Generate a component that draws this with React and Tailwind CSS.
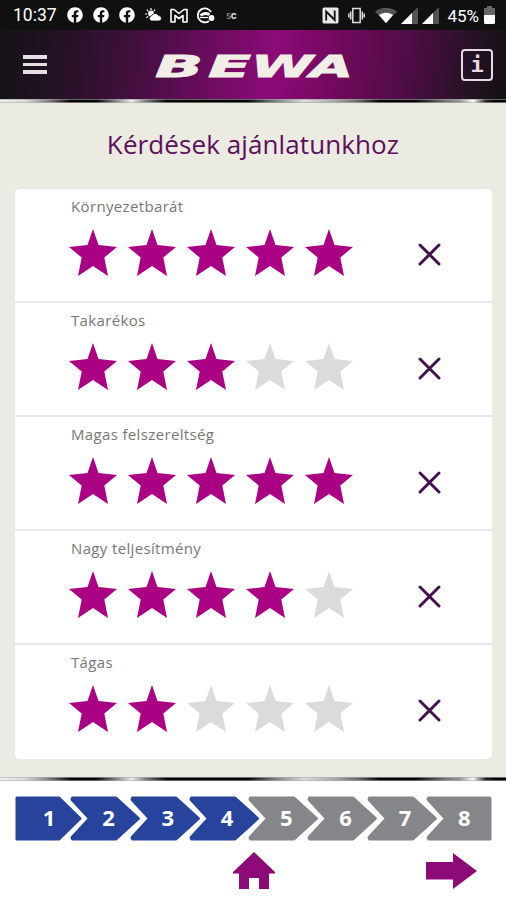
import { FaFacebook } from 'react-icons/fa';

const questions = [
  { label: 'Környezetbarát', value: 5 },
  { label: 'Takarékos', value: 3 },
  { label: 'Magas felszereltség', value: 5 },
  { label: 'Nagy teljesítmény', value: 4 },
  { label: 'Tágas', value: 2 },
];

const steps = [1, 2, 3, 4, 5, 6, 7, 8];
const currentStep = 4;

const StatusBar = () => (
  <div className="flex h-[30px] items-center bg-[#101010] pl-[13px] pr-[11px] text-white">
    <span className="w-[54px] pt-[2px] font-['Roboto',sans-serif] text-[17.5px] leading-none">10:37</span>
    <div className="flex gap-[10px]">
      <FaFacebook size={16} />
      <FaFacebook size={16} />
      <FaFacebook size={16} />
    </div>
    {/* Weather */}
    <svg className="ml-[10px]" width="17" height="14" viewBox="0 0 17 14" fill="#fff">
      <circle cx="6" cy="5.5" r="3" />
      <path d="M6 0v2M1.8 1.6l1.4 1.4M0 6h2M10 1.6L8.8 3M1.5 9.8l1.6-1.4" stroke="#fff" strokeWidth="1.2" />
      <path d="M6.5 13a2.7 2.7 0 0 1 .1-5.3A3.8 3.8 0 0 1 13.5 7.6A2.7 2.7 0 0 1 14 13z" stroke="#101010" strokeWidth=".8" />
    </svg>
    {/* Mail */}
    <svg className="ml-[8px]" width="18" height="15" viewBox="0 0 18 15" fill="none" stroke="#fff" strokeWidth="1.6" strokeLinejoin="round">
      <path d="M1 14V1.5H4L9 5.5L14 1.5H17V14H13V7.5L9 10.5L5 7.5V14Z" />
    </svg>
    {/* Circle badge */}
    <svg className="ml-[8px]" width="19" height="17" viewBox="0 0 19 17" fill="none" stroke="#fff" strokeWidth="1.8">
      <path d="M15 5A7 7 0 1 0 13 14" />
      <path d="M4.500 8.500Q8 5 13.500 7.500" strokeWidth="3" />
      <path d="M4 10.500H12" strokeWidth="1.200" />
      <circle cx="15.500" cy="11" r="2" fill="#fff" />
    </svg>
    <span className="ml-[11px] font-['Inter',sans-serif] text-[10px] font-bold leading-none tracking-[-0.5px] text-[#ddd]">
      <span className="font-normal text-[#999]">s</span>c
    </span>
    <div className="ml-auto flex items-center">
      {/* NFC */}
      <svg width="17" height="17" viewBox="0 0 17 17">
        <rect x=".5" y=".5" width="16" height="16" rx="1.5" fill="#e8e8e8" />
        <path d="M4.200 13.500V4.500l8.500 8.500V3.500" fill="none" stroke="#101010" strokeWidth="1.800" />
      </svg>
      {/* Vibrate */}
      <svg className="ml-[9px]" width="17" height="17" viewBox="0 0 17 17" fill="none" stroke="#ddd" strokeWidth="1.500">
        <rect x="4.800" y="1.500" width="7.400" height="14" />
        <path d="M2.700 4.500v8M.8 6.500v4M14.300 4.500v8M16.200 6.500v4" />
      </svg>
      {/* Wifi */}
      <svg className="ml-[10px]" width="22" height="17" viewBox="0 0 22 17">
        <path d="M0 4.500Q11-3 22 4.500L11 16.500Z" fill="#555" />
        <path d="M4 8Q11 3.500 18 8L11 16Z" fill="#fff" />
      </svg>
      {/* Signal */}
      <svg className="ml-[4px]" width="17" height="17" viewBox="0 0 17 17">
        <path d="M0 17L17 0V17Z" fill="#555" />
        <path d="M0 17L11 6V17Z" fill="#fff" />
      </svg>
      <svg className="ml-[4px]" width="17" height="17" viewBox="0 0 17 17">
        <path d="M0 17L17 0V17Z" fill="#555" />
        <path d="M0 17L11 6V17Z" fill="#fff" />
      </svg>
      <span className="ml-[8px] pt-[2px] font-['Roboto',sans-serif] text-[17px] leading-none">45%</span>
      {/* Battery */}
      <svg className="ml-[5px]" width="11" height="18" viewBox="0 0 11 18">
        <path d="M0 2H3V0H8V2H11V9H0Z" fill="#666" />
        <path d="M0 9H11V16.500Q11 18 9.500 18H1.500Q0 18 0 16.500Z" fill="#fff" />
      </svg>
    </div>
  </div>
);

const Header = () => (
  <header className="flex h-[69px] items-center bg-[linear-gradient(98deg,#151216_0%,#1e1220_9%,#3a1037_24%,#640c58_39%,#8c0b78_54%,#75095f_65%,#4e0c45_80%,#231222_93%,#131012_100%)] pl-[23px] pr-[13px]">
    <div className="flex w-6 flex-col gap-[4px]">
      <span className="h-[3.5px] bg-[#e4dfe2]"></span>
      <span className="h-[3.5px] bg-[#e4dfe2]"></span>
      <span className="h-[3.5px] bg-[#e4dfe2]"></span>
    </div>
    <svg className="ml-[101px]" width="214" height="48" viewBox="0 0 214 48" fill="#f1eee6" stroke="#f1eee6" strokeWidth=".9" fontFamily="DejaVu Sans" fontWeight="bold" fontStyle="italic" fontSize="31">
      <text x="7" y="36" textLength="48" lengthAdjust="spacingAndGlyphs">B</text>
      <text x="60" y="36" textLength="43" lengthAdjust="spacingAndGlyphs">E</text>
      <text x="103" y="36" textLength="62" lengthAdjust="spacingAndGlyphs">W</text>
      <text x="162" y="36" textLength="43" lengthAdjust="spacingAndGlyphs">A</text>
    </svg>
    <div className="ml-auto flex h-8 w-8 items-center justify-center rounded-[4px] border-[2.5px] border-[#e6d9e4] font-['DejaVu_Sans_Mono',monospace] text-[22px] font-bold leading-none text-[#e6d9e4]">i</div>
  </header>
);

const Star = ({ active }) => (
  <svg width="48" height="47" viewBox="0 0 48 47" className={active ? 'fill-[#a90084]' : 'fill-[#dbdbdb]'}>
    <path d="M24 0L29.500 16L48 18L35.300 28.500L39 47L24 37L9 47L12.700 28.500L0 18L18.500 16Z" />
  </svg>
);

const Question = ({ label, value }) => (
  <div className="h-[114px] border-b-2 border-[#e7e7e7] pl-[53.5px] pt-[7px] last:border-b-0">
    <div className="pl-[2.5px] font-['Open_Sans',sans-serif] text-[15px] leading-[20px] tracking-[0.35px] text-[#777]">{label}</div>
    <div className="mt-[13px] flex items-center">
      <div className="flex gap-[11.2px]">
        {[1, 2, 3, 4, 5].map((n) => (
          <Star key={n} active={n <= value} />
        ))}
      </div>
      <svg className="ml-[64.5px] mt-[5px]" width="23" height="23" viewBox="0 0 23 23" fill="none" stroke="#43104f" strokeWidth="2.9" strokeLinecap="round">
        <path d="M2 2L21 21M21 2L2 21" />
      </svg>
    </div>
  </div>
);

const Step = ({ n }) => {
  let d = 'M-1.500 2H42L64.500 22.500L42 43H-1.500L-2 41.500L15.500 22.500L-2 3.500Z';
  if (n === 1) d = 'M2 2H44L65 22.500L44 43H2Z';
  if (n === 8) d = 'M-1.500 2H60V43H-1.500L-2 41.500L15.500 22.500L-2 3.500Z';
  const color = n <= currentStep ? '#27439b' : '#85868a';
  return (
    <div className="grid w-[59.3px] items-center">
      <svg className="col-start-1 row-start-1 overflow-visible" width="59" height="45" viewBox="0 0 59 45" fill={color} stroke={color} strokeWidth="3" strokeLinejoin="round">
        <path d={d} />
      </svg>
      <span className="z-10 col-start-1 row-start-1 pb-[4px] pl-[9px] text-center font-['Open_Sans',sans-serif] text-[22px] font-bold leading-none text-white">{n}</span>
    </div>
  );
};

const Shine = () => (
  <div className="h-[4px] border-y border-[#aaa]/60 bg-[linear-gradient(90deg,#eee_0%,#ddd_5%,#777_10%,#050505_14%,#050505_19%,#888_23%,#eee_26%,#777_29%,#050505_33%,#050505_49%,#777_54%,#ddd_60%,#aaa_66%,#666_71%,#050505_75%,#050505_82%,#777_88%,#999_91%,#fff_93.5%,#222_96%,#050505_98%)]"></div>
);

const App = () => (
  <div className="flex h-[900px] w-[506px] flex-col overflow-hidden bg-white">
    <StatusBar />
    <Header />
    <Shine />
    <main className="flex h-[674px] flex-col bg-[#ebebe1] px-[15px]">
      <h1 className="pt-[24px] text-center font-['Open_Sans',sans-serif] text-[26px] leading-[34px] tracking-[0.1px] text-[#5d0f5d]">Kérdések ajánlatunkhoz</h1>
      <div className="mt-[27.5px] w-[477px] overflow-hidden rounded-[5px] bg-white">
        {questions.map((q) => (
          <Question key={q.label} {...q} />
        ))}
      </div>
    </main>
    <Shine />
    <footer className="flex flex-col pl-[15px] pt-[15px]">
      <div className="flex">
        {steps.map((n) => (
          <Step key={n} n={n} />
        ))}
      </div>
      <div className="mt-[11px] flex pl-[218px]">
        <svg width="42" height="37" viewBox="0 0 42 37" fill="#8d0b78">
          <path d="M0 20L21 0L42 20V21.500H36V37H26V26H16V37H6V21.500H0Z" />
        </svg>
        <svg className="ml-[151px] mt-[1px]" width="51" height="36" viewBox="0 0 51 36" fill="#8d0b78">
          <path d="M0 9H27V0L51 18L27 36V26.500H0Z" />
        </svg>
      </div>
    </footer>
  </div>
);

export default App;
